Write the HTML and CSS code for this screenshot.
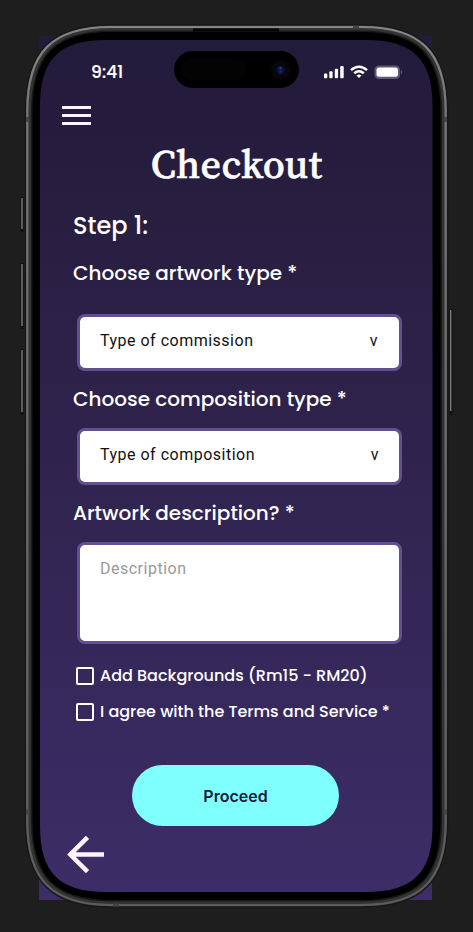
FILE: index.html
```html
<!DOCTYPE html>
<html lang="en">
<head>
<meta charset="utf-8">
<title>Checkout</title>
<link rel="stylesheet" href="styles.css">
</head>
<body>
<div class="stage">
  <svg class="device" width="473" height="932" viewBox="0 0 473 932" aria-hidden="true">
    <defs>
      <linearGradient id="metal" x1="0" y1="0" x2="0" y2="1"><stop offset="0" stop-color="#858585"/><stop offset=".1" stop-color="#777"/><stop offset="1" stop-color="#5c5c5c"/></linearGradient>
      <linearGradient id="screen" x1="0" y1="0" x2="0" y2="1"><stop offset="0" stop-color="#231b3b"/><stop offset=".2" stop-color="#281e40"/><stop offset="1" stop-color="#3c2d67"/></linearGradient>
      <radialGradient id="lens"><stop offset="0" stop-color="#14205c"/><stop offset=".6" stop-color="#0b0f35"/><stop offset="1" stop-color="#05050d"/></radialGradient>
    </defs>
    <path fill="url(#screen)" d="M39 36H432V900H39z"/>
    <g fill="none" stroke="#111" stroke-width="3"><path d="M22 197V232M22 263V329M22 349V415M451 309V415"/></g>
    <g fill="none" stroke="#858585" stroke-width="1.3"><path d="M22 198V229M22 264V326M22 350V412M450.700 310V411"/></g>
    <path fill="#000" stroke="#181818" stroke-width="8" d="M112 28H361C419.800 28 444.500 52.700 444.500 112V820.500C444.500 879.300 419.800 904 361 904H112C53.200 904 28.500 879.300 28.500 820.500V112C28.500 52.700 53.200 28 112 28z"/>
    <path fill="none" stroke="#333" stroke-width="5" d="M112 28H361C419.800 28 444.500 52.700 444.500 112V820.500C444.500 879.300 419.800 904 361 904H112C53.200 904 28.500 879.300 28.500 820.500V112C28.500 52.700 53.200 28 112 28z"/>
    <path fill="none" stroke="url(#metal)" stroke-width="2.200" d="M111 27H362C420.800 27 445.700 52 445.700 111V821.500C445.700 880.300 420.800 905 362 905H111C52.200 905 27.300 880.300 27.300 821.500V111C27.300 52 52.200 27 111 27z"/>
    <path stroke="#444" stroke-width="5" d="M26 119.500H29M444 119.500H447M26 812H29M444 812H447"/>
    <path stroke="#444" stroke-width="3" d="M353 27H359M113 905H119"/>
    <path d="M193 30H279" stroke="#050505" stroke-width="3"/>
    <path fill="url(#screen)" d="M106 40H366C412.700 40 432.500 59.300 432.500 106V826C432.500 872.700 412.700 892 366 892H106C59.300 892 40 872.700 40 826V106C40 59.300 59.300 40 106 40z"/>
    <rect x="174" y="51" width="125" height="37" rx="18.500" fill="#000"/>
    <rect x="181" y="59" width="65" height="21" rx="10.500" fill="#030303"/>
    <circle cx="280.500" cy="70" r="9.500" fill="#08050c"/><circle cx="280.500" cy="70" r="5.500" fill="url(#lens)"/>
    <circle cx="280.500" cy="68" r="1.300" fill="#253478"/><circle cx="280.500" cy="72" r="1.200" fill="#202b70"/>
  </svg>
  <main class="screen">
    <header class="status">
      <span class="time">9:41</span>
      <svg class="signals" width="80" height="16" viewBox="0 0 80 16" fill="#fff" aria-label="Status">
        <rect x="0" y="9.500" width="3.300" height="4.700" rx="1"/><rect x="5.300" y="7.200" width="3.300" height="7" rx="1"/><rect x="10.800" y="4.700" width="3.300" height="9.500" rx="1"/><rect x="16.200" y="2" width="3.500" height="12.200" rx="1"/>
        <g fill="none" stroke="#fff" stroke-width="2.500"><path d="M27 6.100Q35 -.7 43 6.100M30.200 9.300Q35 5.100 39.800 9.300"/></g><path d="M32.500 11.400Q35 9.600 37.500 11.400L35 14z"/>
        <rect x="51" y="2" width="24.600" height="12.400" rx="4" fill="#5e576f" stroke="#5e576f" stroke-width="1.200"/><rect x="52.500" y="3.600" width="21.500" height="9.200" rx="2.500"/><path fill="#5e576f" d="M77 6.200Q79.500 8.200 77 10.200z"/>
      </svg>
    </header>
    <button class="menu" aria-label="Menu"><i></i><i></i><i></i></button>
    <h1>Checkout</h1>
    <h2>Step 1:</h2>
    <section class="field art"><label>Choose artwork type *</label><div class="box select"><span>Type of commission</span><b>v</b></div></section>
    <section class="field comp"><label>Choose composition type *</label><div class="box select"><span>Type of composition</span><b>v</b></div></section>
    <section class="field desc"><label>Artwork description? *</label><div class="box area">Description</div></section>
    <div class="checks">
      <div class="check"><i></i><span>Add Backgrounds (Rm15 - RM20)</span></div>
      <div class="check"><i></i><span>I agree with the Terms and Service *</span></div>
    </div>
    <button class="proceed">Proceed</button>
    <svg class="back" width="38" height="38" viewBox="0 0 38 38" fill="none" stroke="#fdf3ff" stroke-width="4.500"><path d="M37 18.500H4M20.500 1.300L3.300 18.500L20.500 35.700"/></svg>
  </main>
</div>
</body>
</html>
```
FILE: styles.css
```css
* { box-sizing: border-box; }
body { margin: 0; background: #1e1e1e; font-family: Poppins, Inter, sans-serif; color: #fff; }
.stage { position: relative; width: 473px; height: 932px; overflow: hidden; }
.device { position: absolute; inset: 0; }
.screen { position: relative; width: 393px; height: 852px; margin: 40px; display: flex; flex-direction: column; align-items: flex-start; }
button { border: 0; padding: 0; background: none; }
.status { width: 100%; height: 64px; padding: 0 29px 0 51px; display: flex; align-items: center; justify-content: space-between; }
.time { font-size: 17px; font-weight: 500; letter-spacing: .1px; -webkit-text-stroke: .2px #fff; }
.menu { margin: 1.5px 0 0 22px; width: 29px; height: 20px; display: flex; flex-direction: column; justify-content: space-between; }
.menu i { display: block; width: 29px; height: 3.3px; background: #fdf3ff; }
h1 { margin: 16.5px 0 0; width: 100%; text-align: center; font: 500 40px/44px "Source Serif Pro", "Source Serif 4", "Liberation Serif", serif; letter-spacing: .3px; -webkit-text-stroke: .5px #fff; }
h2 { margin: 24px 0 0 33px; font-size: 24px; line-height: 32px; font-weight: 500; }
.field { margin-left: 33px; }
.field label { display: block; font-size: 20px; line-height: 30px; font-weight: 500; white-space: nowrap; }
.art { margin-top: 16px; }
.comp, .desc { margin-top: 13px; }
.box { margin: 14px 0 0 4px; width: 325px; height: 57px; border: 3px solid #625090; border-radius: 8px; background: #fff; color: #111; font: 16px/24px Roboto, sans-serif; letter-spacing: .5px; padding: 12px 20px; }
.art .box { margin-top: 26px; }
.select { display: flex; justify-content: space-between; }
.select b { font-weight: 400; }
.art b { margin-right: 1px; }
.area { height: 102px; color: #999; }
.checks { margin: 22px 0 0 36px; display: flex; flex-direction: column; gap: 16px; }
.check { display: flex; align-items: center; gap: 6px; height: 20px; font-size: 16px; font-weight: 500; white-space: nowrap; }
.check i { width: 18px; height: 18px; border: 2px solid #fff; border-radius: 2px; }
.check span { margin-top: -2px; }
.proceed { margin: 43px 0 0 92px; width: 207px; height: 61px; border-radius: 31px; background: #80ffff; color: #21183b; font: 600 16px/24px Inter, sans-serif; }
.back { margin: 10px 0 0 27px; }
```
